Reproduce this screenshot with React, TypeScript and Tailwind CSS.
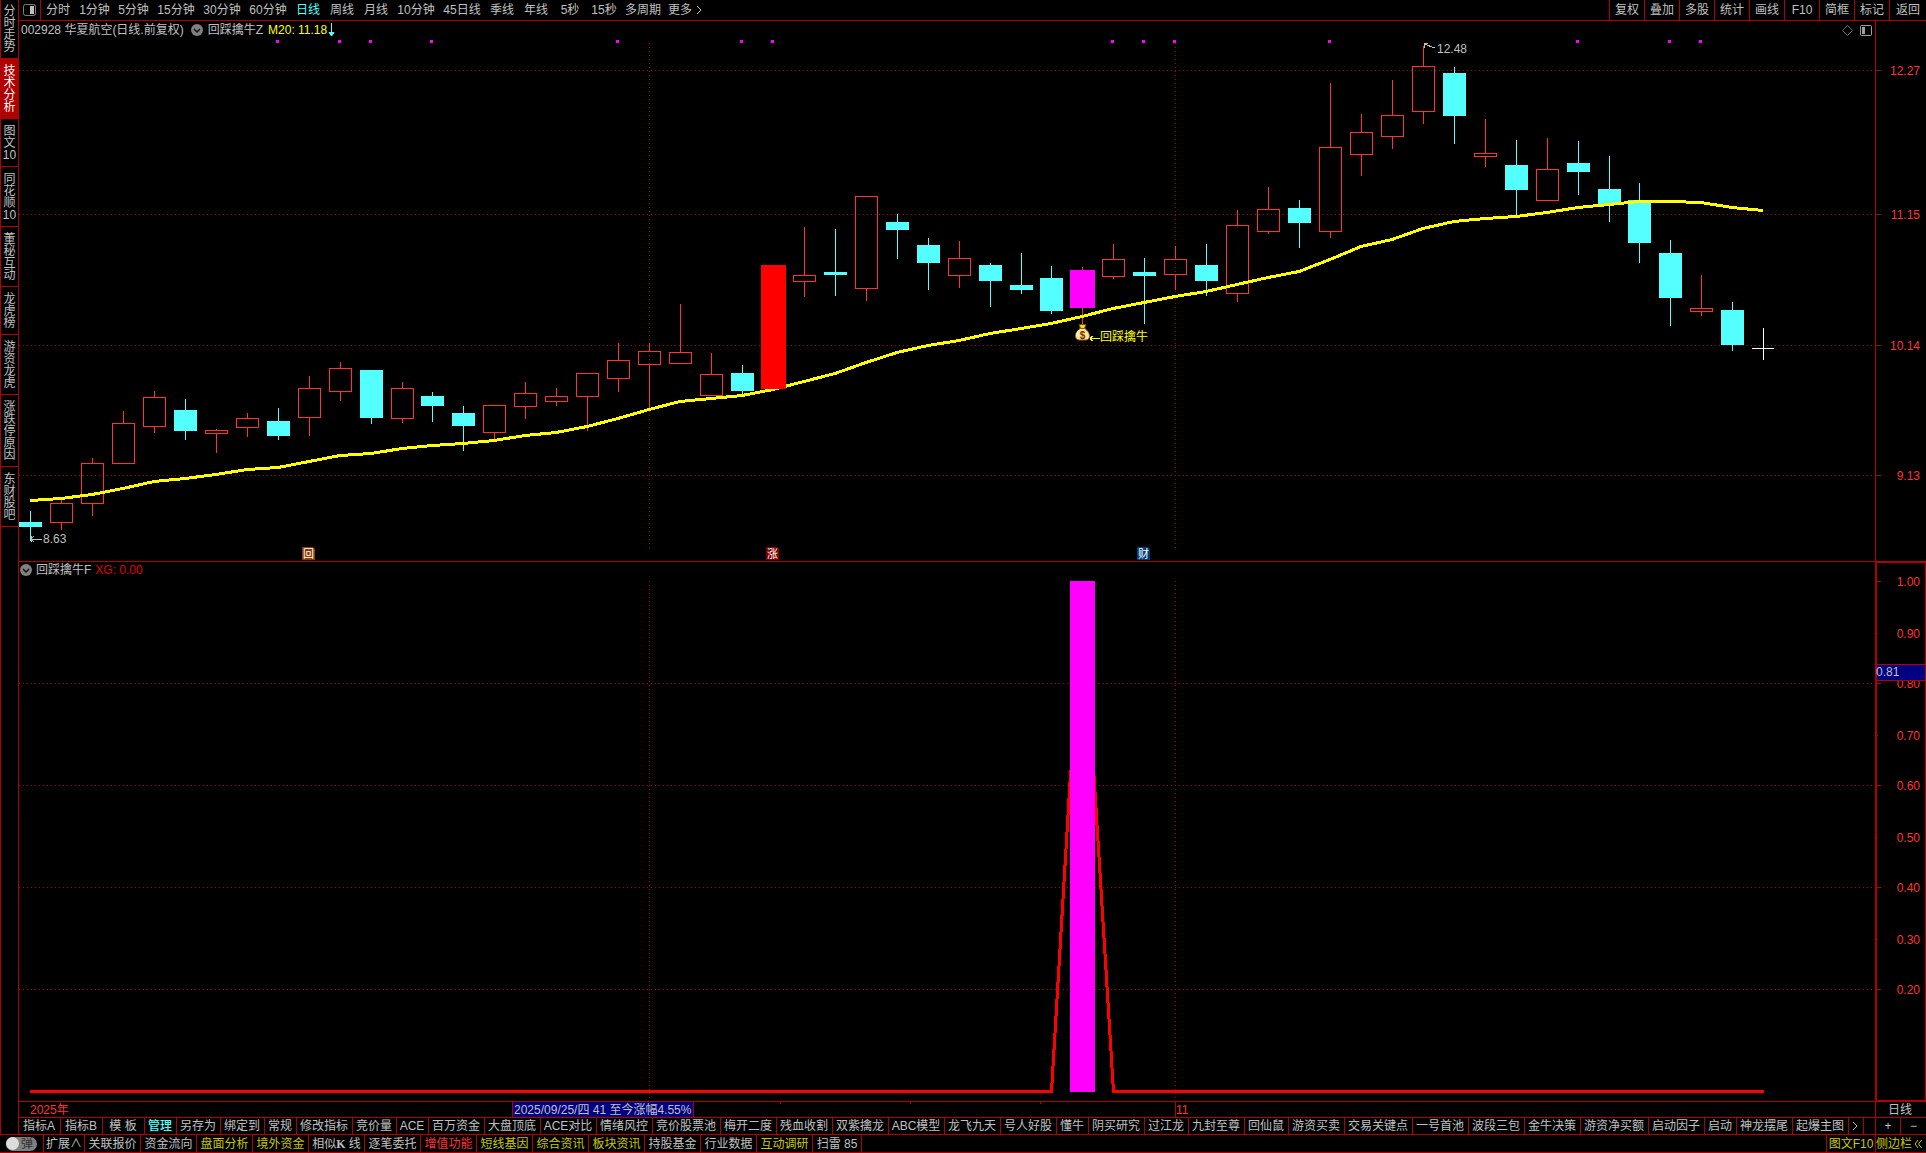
import React from "react";

const GRID = "#b00000";
const UP = "#ff3232";
const DOWN = "#54ffff";
const TEXT = "#c0c0c0";

type Kind = "up" | "down" | "limit" | "signal";
type Candle = [Kind, number, number, number, number];

/* kind, body top, body bottom, wick top, wick bottom */
const candles: Candle[] = [
  ["down", 522, 527, 511, 541], ["up", 503, 523, 500, 530], ["up", 463, 504, 458, 516],
  ["up", 423, 464, 411, 464], ["up", 397, 427, 391, 433], ["down", 410, 431, 399, 440],
  ["up", 430, 434, 429, 453], ["up", 418, 428, 413, 437], ["down", 421, 436, 408, 440],
  ["up", 388, 418, 376, 436], ["up", 368, 392, 362, 401], ["down", 370, 418, 370, 424],
  ["up", 388, 419, 382, 423], ["down", 396, 406, 392, 422], ["down", 413, 426, 406, 451],
  ["up", 405, 433, 405, 440], ["up", 393, 407, 382, 419], ["up", 396, 402, 388, 406],
  ["up", 373, 397, 373, 431], ["up", 360, 379, 343, 392], ["up", 351, 365, 343, 409],
  ["up", 352, 364, 304, 364], ["up", 374, 396, 353, 396], ["down", 373, 391, 365, 394],
  ["limit", 265, 389, 265, 389], ["up", 275, 282, 227, 297], ["down", 272, 275, 229, 296],
  ["up", 196, 289, 196, 301], ["down", 222, 230, 214, 259], ["down", 245, 263, 238, 290],
  ["up", 258, 276, 241, 288], ["down", 265, 281, 263, 307], ["down", 285, 290, 253, 294],
  ["down", 278, 311, 266, 314], ["signal", 270, 308, 267, 324], ["up", 259, 277, 244, 279],
  ["down", 272, 276, 258, 324], ["up", 259, 275, 246, 290], ["down", 265, 281, 244, 296],
  ["up", 225, 294, 210, 302], ["up", 209, 232, 187, 234], ["down", 208, 223, 200, 248],
  ["up", 147, 232, 83, 238], ["up", 132, 155, 114, 176], ["up", 115, 137, 80, 149],
  ["up", 66, 112, 46, 124], ["down", 73, 116, 67, 144], ["up", 153, 157, 119, 167],
  ["down", 165, 190, 140, 215], ["up", 169, 201, 138, 201], ["down", 163, 172, 141, 195],
  ["down", 189, 204, 156, 222], ["down", 200, 243, 183, 263], ["down", 253, 298, 240, 326],
  ["up", 308, 312, 275, 316], ["down", 310, 345, 302, 351],
];

const average = [
  500, 498, 494, 488, 481, 478, 474, 469, 467, 461, 455, 453, 448, 445, 443, 440, 435, 432, 426,
  418, 409, 401, 398, 395, 389, 381, 373, 362, 352, 345, 340, 333, 328, 323, 316, 308, 302, 296,
  291, 284, 277, 271, 259, 246, 239, 228, 221, 218, 216, 212, 207, 204, 201, 201, 202, 207, 210,
];

const pinkDots = [8, 10, 11, 13, 19, 23, 24, 35, 36, 37, 42, 50, 53, 54];
const barX = (i: number) => Math.floor(30.6 + i * 30.95);

const periods: [string, string][] = [
  ["分时", "w-[34px]"], ["1分钟", "w-[39px]"], ["5分钟", "w-[39px]"], ["15分钟", "w-[46px]"],
  ["30分钟", "w-[46px]"], ["60分钟", "w-[46px]"], ["日线", "w-[34px]"], ["周线", "w-[34px]"],
  ["月线", "w-[34px]"], ["10分钟", "w-[46px]"], ["45日线", "w-[46px]"], ["季线", "w-[34px]"],
  ["年线", "w-[34px]"], ["5秒", "w-[34px]"], ["15秒", "w-[34px]"], ["多周期", "w-11"],
];

const tools = ["复权", "叠加", "多股", "统计", "画线", "F10", "简框", "标记", "返回"];

const sideTabs: string[][] = [
  ["分", "时", "走", "势"], ["技", "术", "分", "析"], ["图", "文", "10"], ["同", "花", "顺", "10"],
  ["董", "秘", "互", "动"], ["龙", "虎", "榜"], ["游", "资", "龙", "虎"],
  ["涨", "跌", "停", "原", "因"], ["东", "财", "股", "吧"],
];

const W2 = "w-8", W3 = "w-11", W4 = "w-14", W5 = "w-[68px]", WA = "w-[42px]";
const indicators: [string, string][] = [
  ["指标A", WA], ["指标B", WA], ["模 板", WA], ["管理", W2], ["另存为", W3], ["绑定到", W3],
  ["常规", W2], ["修改指标", W4], ["竞价量", W3], ["ACE", W2], ["百万资金", W4], ["大盘顶底", W4],
  ["ACE对比", W4], ["情绪风控", W4], ["竞价股票池", W5], ["梅开二度", W4], ["残血收割", W4],
  ["双紫擒龙", W4], ["ABC模型", W4], ["龙飞九天", W4], ["号人好股", W4], ["懂牛", W2],
  ["阴买研究", W4], ["过江龙", W3], ["九封至尊", W4], ["回仙鼠", W3], ["游资买卖", W4],
  ["交易关键点", W5], ["一号首池", W4], ["波段三包", W4], ["金牛决策", W4], ["游资净买额", W5],
  ["启动因子", W4], ["启动", W2], ["神龙摆尾", W4], ["起爆主图", W4],
];

const yellow = "text-[#c8c800]";
const gray = "text-[#c0c0c0]";
const links: [React.ReactNode, string, string][] = [
  ["扩展∧", "w-[41px]", gray], ["关联报价", W4, gray], ["资金流向", W4, gray],
  ["盘面分析", W4, yellow], ["境外资金", W4, yellow],
  [<>相似<b className="font-['Liberation_Serif',serif]">K</b> 线</>, W4, gray],
  ["逐笔委托", W4, gray], ["增值功能", W4, "text-[#ff3232]"], ["短线基因", W4, yellow],
  ["综合资讯", W4, yellow], ["板块资讯", W4, yellow], ["持股基金", W4, gray],
  ["行业数据", W4, gray], ["互动调研", W4, yellow], ["扫雷 85", "w-[49px]", gray],
];

function CircleChevron() {
  return (
    <svg className="h-3 w-3 shrink-0" viewBox="0 0 12 12" aria-hidden="true">
      <circle cx="6" cy="6" r="6" fill="#808080" />
      <path d="M3 5l3 3 3-3" fill="none" stroke="#101010" strokeWidth="1.5" />
    </svg>
  );
}

function CandleMark({ x, data }: { x: number; data: Candle }) {
  const [kind, top, bottom, high, low] = data;
  const wick = kind === "down" ? DOWN : UP;
  if (kind === "up") {
    return (
      <g fill="none" stroke={UP}>
        <path d={`M${x + 0.5} ${high}V${top}M${x + 0.5} ${bottom}V${low}`} />
        <rect x={x - 10.5} y={top + 0.5} width="22" height={bottom - top - 1} />
      </g>
    );
  }
  const half = kind === "down" ? 11 : 12;
  const fill = kind === "down" ? DOWN : kind === "limit" ? "#ff0000" : "#ff00ff";
  return (
    <g>
      <path d={`M${x + 0.5} ${high}V${low}`} stroke={wick} />
      <rect x={x - half} y={top} width={half * 2 + 1} height={bottom - top} fill={fill} />
    </g>
  );
}

function Marker({ x, label, color }: { x: number; label: string; color: string }) {
  return (
    <g>
      <path d={`M${x} 547h11l2 2v11h-13z`} fill={color} />
      <text x={x + 6.5} y="558" textAnchor="middle" fontSize="11" fill="#fff">
        {label}
      </text>
    </g>
  );
}

function PriceChart() {
  return (
    <svg className="block h-full w-full" viewBox="19 21 1856 540" preserveAspectRatio="none" role="img" aria-label="华夏航空 日线">
      <g shapeRendering="crispEdges">
        <g stroke={GRID} strokeDasharray="1 3">
          {[70, 214, 345, 475].map((y) => <path key={y} d={`M19 ${y + 0.5}H1875`} />)}
          <path d="M649.5 43V550M1175.5 43V550" />
        </g>
        {pinkDots.map((i) => <rect key={i} x={barX(i) - 2} y="40" width="3" height="3" fill="#ff00ff" />)}
        {candles.map((c, i) => <CandleMark key={i} x={barX(i)} data={c} />)}
        <path d="M1763.5 328V360M1752 348.5H1774" stroke="#fff" />
        <polyline
          points={average.map((y, i) => `${barX(i)},${y + 0.5}`).join(" ")}
          fill="none" stroke="#ffff00" strokeWidth="3"
        />
        <rect x={barX(24) - 12} y="265" width="25" height="124" fill="#ff0000" />
        <path d="M31 539.5H42M31 536V542M31 539l3-3M31 539l3 3" stroke={TEXT} fill="none" />
        <path d="M1424 43V48M1424 43.5H1428M1424 44l11 4" stroke={TEXT} fill="none" />
        <path d="M1090 338.5H1100M1090 338l3-2M1090 339l3 2" stroke="#ffff00" fill="none" />
      </g>
      <g fontSize="12">
        <text x="43" y="543" fill={TEXT}>8.63</text>
        <text x="1437" y="53" fill={TEXT}>12.48</text>
        <text x="1100" y="341" fill="#ffff00">回踩擒牛</text>
        <Marker x={302} label="回" color="#8a3c00" />
        <Marker x={766} label="涨" color="#800000" />
        <Marker x={1137} label="财" color="#003c78" />
      </g>
      <g>
        <path d="M1079 324.500h7l-1.500 4h-4z" fill="#f5d428" stroke="#7a4a10" />
        <path d="M1080 328.500h5c2 2 4.500 4 4.500 7.500 0 3-2 4-4 4h-6c-2 0-4-1-4-4 0-3.500 2.500-5.500 4.500-7.500z" fill="#fbe88a" stroke="#8a6030" />
        <path d="M1079 330c-2 2-2.500 4-2 6" fill="none" stroke="#fff" />
        <text x="1082.5" y="339" textAnchor="middle" fontSize="10" fontWeight="bold" fill="#7a2a10">$</text>
      </g>
    </svg>
  );
}

function SignalChart() {
  return (
    <svg className="block h-full w-full" viewBox="19 562 1856 539" preserveAspectRatio="none" shapeRendering="crispEdges" role="img" aria-label="回踩擒牛F">
      <g stroke={GRID} strokeDasharray="1 3">
        {[683, 785, 887, 989].map((y) => <path key={y} d={`M19 ${y + 0.5}H1875`} />)}
        <path d="M649.5 581V1101M1175.5 581V1101" />
      </g>
      <path d="M30 1091.500H1051.500L1082 581L1113.500 1091.500H1764" fill="none" stroke="#ff0000" strokeWidth="3" />
      <path d="M1070 570H1095V790H1070z" fill="#000" />
      <rect x="1070" y="581" width="25" height="511" fill="#ff00ff" />
      <path d="M1069 570V770M1096 570V770" stroke="#000" strokeWidth="2" />
    </svg>
  );
}

function PriceAxis() {
  const rows: [string, number][] = [["12.27", 70], ["11.15", 214], ["10.14", 345], ["9.13", 475]];
  return (
    <svg className="block h-full w-full" viewBox="1876 21 50 540" preserveAspectRatio="none">
      {rows.map(([label, y]) => (
        <g key={label}>
          <path d={`M1876 ${y + 0.5}h5`} stroke={GRID} />
          <text x="1920" y={y + 5} textAnchor="end" fontSize="12" fill={UP}>{label}</text>
        </g>
      ))}
    </svg>
  );
}

function SignalAxis() {
  const rows: [string, number][] = [
    ["1.00", 581], ["0.90", 633], ["0.80", 683], ["0.70", 735], ["0.60", 785],
    ["0.50", 837], ["0.40", 887], ["0.30", 939], ["0.20", 989],
  ];
  return (
    <svg className="block h-full w-full" viewBox="1876 562 50 539" preserveAspectRatio="none">
      {rows.map(([label, y], i) => (
        <g key={label}>
          <path d={`M1876 ${y + 0.5}h${i % 2 ? 2 : 5}`} stroke={GRID} />
          <text x="1920" y={y + 5} textAnchor="end" fontSize="12" fill={UP}>{label}</text>
        </g>
      ))}
      <path d="M1876.500 562V1101M1925.500 562V1101M1876 562.500H1926M1876 1100.500H1926" stroke={GRID} />
      <rect x="1876.5" y="664.5" width="49" height="16" fill="#000080" stroke={GRID} />
      <text x="1876" y="676" fontSize="12" fill={TEXT}>0.81</text>
    </svg>
  );
}

export default function App() {
  return (
    <div className="flex h-screen w-full flex-col overflow-hidden bg-black font-['Liberation_Sans','Noto_Sans_CJK_SC',sans-serif] text-xs leading-4 whitespace-nowrap text-[#c0c0c0]">
      <div className="flex min-h-0 flex-1">
        <nav className="w-[19px] shrink-0 border-x border-[#b00000]" aria-label="侧栏">
          {sideTabs.map((chars, i) => (
            <button
              key={i}
              type="button"
              className={
                "flex w-full flex-col items-center border-b border-[#b00000] pb-[5px] leading-3 " +
                (i === 0 ? "pt-[5px] " : "pt-[6px] ") +
                (i === 1 ? "bg-[#b00000] text-white" : "")
              }
            >
              {chars.map((c, k) => <span key={k} className="h-3">{c}</span>)}
            </button>
          ))}
        </nav>

        <div className="flex min-w-0 flex-1 flex-col">
          <header className="flex h-[21px] shrink-0 items-stretch border-b border-[#b00000]">
            <button type="button" aria-label="面板" className="flex w-[22px] items-center border-r border-[#b00000] pl-1">
              <svg className="h-3 w-[13px]" viewBox="0 0 13 12">
                <rect x="0.500" y="0.500" width="12" height="11" rx="2" fill="none" stroke="#808080" />
                <rect x="7" y="2" width="4" height="8" fill="#c0c0c0" />
              </svg>
            </button>
            {periods.map(([label, width]) => (
              <button key={label} type="button" className={"text-center " + width + (label === "日线" ? " text-[#54ffff]" : "")}>
                {label}
              </button>
            ))}
            <button type="button" className="flex items-center gap-1 pl-[3px]">
              更多
              <svg className="h-[10px] w-[6px]" viewBox="0 0 6 10" aria-hidden="true">
                <path d="M1 1l4 4-4 4" fill="none" stroke="#c0c0c0" />
              </svg>
            </button>
            <div className="ml-auto flex">
              {tools.map((t, i) => (
                <button key={t} type="button" className={"border-l border-[#b00000] text-center " + (i === 8 ? "w-[37px]" : "w-[35px]")}>
                  {t}
                </button>
              ))}
            </div>
          </header>

          <main className="grid min-h-0 flex-1 grid-cols-[1fr_51px] grid-rows-[541fr_539fr]">
            <section className="relative min-h-0 min-w-0 border-b border-[#b00000]">
              <PriceChart />
              <div className="absolute inset-x-0 top-px flex items-center gap-[5px] pl-[2px]">
                <span className="pr-[2px]">002928 华夏航空(日线.前复权)</span>
                <CircleChevron />
                <span>回踩擒牛Z</span>
                <span className="text-[#ffff00]">M20: 11.18</span>
                <svg className="-ml-1 h-[14px] w-[7px]" viewBox="0 0 7 14" aria-hidden="true">
                  <path d="M3.500 0V13M1 9.500l2.500 3.500 2.500-3.500z" stroke={DOWN} fill={DOWN} />
                </svg>
                <svg className="ml-auto h-[11px] w-[11px]" viewBox="0 0 11 11" aria-hidden="true">
                  <path d="M5.500 0.500l5 5-5 5-5-5z" fill="none" stroke="#707070" />
                </svg>
                <svg className="mr-[3px] ml-[2px] h-[11px] w-3" viewBox="0 0 12 11" aria-hidden="true">
                  <rect x="0.500" y="0.500" width="11" height="10" rx="1" fill="none" stroke="#a0a0a0" />
                  <rect x="2" y="2" width="3" height="7" fill="#a0a0a0" />
                </svg>
              </div>
            </section>
            <div className="min-h-0 border-b border-l border-[#b00000]"><PriceAxis /></div>
            <section className="relative min-h-0 min-w-0">
              <SignalChart />
              <div className="absolute inset-x-0 top-0 flex items-center gap-1 pl-px">
                <CircleChevron />
                <span>回踩擒牛F</span>
                <span className="text-[#e00000]">XG: 0.00</span>
              </div>
            </section>
            <div className="min-h-0 border-l border-[#b00000]"><SignalAxis /></div>
          </main>

          <div className="flex h-4 shrink-0 border-t border-[#b00000] leading-4">
            <div className="relative grid flex-1 grid-cols-[493fr_663fr_700fr]">
              <span className="pl-[11px] text-[#ff3232]">2025年</span>
              <div>
                <span className="block h-[15px] w-fit border-x border-[#b00000] bg-[#000080] pr-[2px] pl-px">2025/09/25/四 41 至今涨幅4.55%</span>
              </div>
              <span className="border-l border-[#b00000] text-[#ff3232]">11</span>
              <i className="absolute top-0 left-[41%] h-[2px] w-px bg-[#b00000]" />
              <i className="absolute top-0 left-[48%] h-[2px] w-px bg-[#b00000]" />
              <i className="absolute top-0 left-[55%] h-[2px] w-px bg-[#b00000]" />
            </div>
            <span className="w-[51px] border-l border-[#b00000] pr-[2px] text-center">日线</span>
          </div>

          <div className="flex h-[17px] shrink-0 border-t border-[#b00000]">
            {indicators.map(([label, width]) => (
              <button key={label} type="button" className={"shrink-0 border-r border-[#b00000] pr-px text-center " + width + (label === "管理" ? " font-medium text-[#54ffff]" : "")}>
                {label}
              </button>
            ))}
            <button type="button" aria-label="更多指标" className="flex w-[15px] items-center border-r border-[#b00000] pl-[3px]">
              <svg className="h-[10px] w-[6px]" viewBox="0 0 6 10"><path d="M1 1l4 4-4 4" fill="none" stroke="#c0c0c0" /></svg>
            </button>
            <button type="button" className="ml-auto w-[26px] shrink-0 border-x border-[#b00000] text-center">+</button>
            <button type="button" className="w-[25px] shrink-0 text-center">−</button>
          </div>
        </div>
      </div>

      <footer className="flex h-[19px] shrink-0 border-y border-[#b00000] leading-[18px]">
        <div className="flex w-11 shrink-0 items-center border-r border-[#b00000] pl-[6px]">
          <button type="button" role="switch" aria-checked="false" className="flex h-[14px] w-[31px] items-center justify-between rounded-full bg-[#808080] pr-1 leading-[14px] text-[#303030]">
            <span className="h-[13px] w-[13px] rounded-full bg-[#dcdcdc]" />弹
          </button>
        </div>
        {links.map(([label, width, color], i) => (
          <a key={i} href="#" className={"shrink-0 border-r border-[#b00000] text-center " + width + " " + color}>{label}</a>
        ))}
        <a href="#" className="ml-auto w-[49px] shrink-0 border-l border-[#b00000] text-center text-[#c8c800]">图文F10</a>
        <button type="button" className="flex w-[51px] shrink-0 items-center gap-[2px] border-l border-[#b00000] text-[#c8c800]">
          侧边栏
          <svg className="h-[10px] w-2" viewBox="0 0 8 10" aria-hidden="true">
            <path d="M4 1L1 5l3 4M7.500 1l-3 4 3 4" fill="none" stroke="#c8c800" />
          </svg>
        </button>
      </footer>
    </div>
  );
}
